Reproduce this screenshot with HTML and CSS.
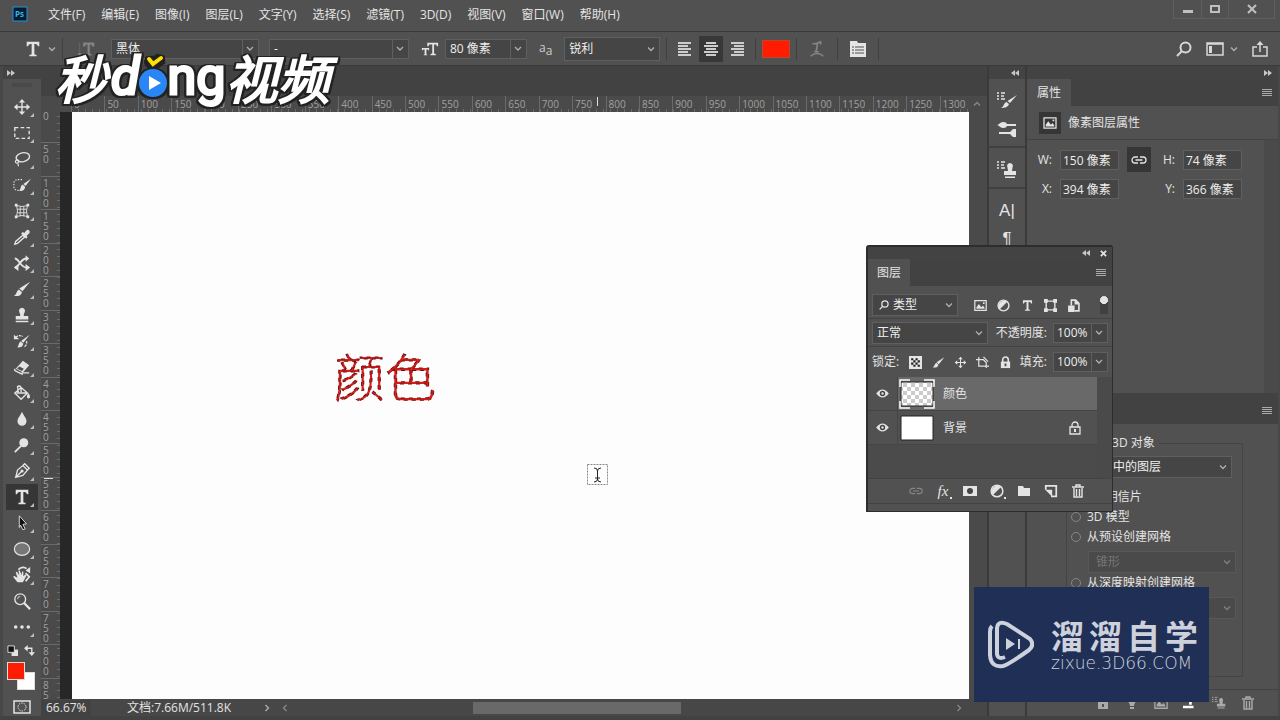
FILE: index.html
```html
<!DOCTYPE html>
<html lang="zh-CN">
<head>
    <meta charset="UTF-8">
    <meta name="viewport" content="width=device-width, initial-scale=1.0">
    <title>Photoshop</title>
    <link rel="stylesheet" href="styles.css">
</head>
<body>

<!-- shared icons -->
<svg class="sprite" aria-hidden="true">
    <symbol id="i-move" viewBox="0 0 20 20"><path d="M10 3v14M3 10h14" stroke="currentColor" stroke-width="1.5"/><path d="M10 1l3.500 4h-7zM10 19l3.500-4h-7zM1 10l4-3.500v7zM19 10l-4-3.500v7z"/></symbol>
    <symbol id="i-marquee" viewBox="0 0 20 20"><rect x="2" y="4" width="16" height="12" fill="none" stroke="currentColor" stroke-width="1.500" stroke-dasharray="4 2.500"/></symbol>
    <symbol id="i-lasso" viewBox="0 0 20 20"><ellipse cx="11" cy="8" rx="7.500" ry="5" transform="rotate(-12 11 8)" fill="none" stroke="currentColor" stroke-width="1.500"/><path d="M5 11c-3 0-3 3.500-.5 3.500S7 11 5 11M5.500 14l.500 4" fill="none" stroke="currentColor" stroke-width="1.300"/></symbol>
    <symbol id="i-quick" viewBox="0 0 20 20"><path d="M10 4H5a4 4 0 0 0-4 4v4a4 4 0 0 0 4 4h3" fill="none" stroke="currentColor" stroke-width="1.300" stroke-dasharray="1.500 1.500"/><path d="M20 3l-6 8-2.500-2zM10.500 9.500l3 2.500c-.5 4-3 5-7 4.500 2.500-1.500 1.500-5 4-7z"/></symbol>
    <symbol id="i-warp" viewBox="0 0 20 20"><path d="M4 4q6 2 12 0-2 6 0 12-6-2-12 0 2-6 0-12zM8 5v11M12 5v11M5 8h10M5 12h10" fill="none" stroke="currentColor" stroke-width="1"/><path d="M2 2h3v3H2zM15 2h3v3h-3zM2 15h3v3H2zM15 15h3v3h-3z"/></symbol>
    <symbol id="i-dropper" viewBox="0 0 20 20"><path d="M11 8l2 2-8 7-3 1 1-3z" fill="none" stroke="currentColor" stroke-width="1.500"/><path d="M9 6l2-1.500 1.500 1 2.500-3a2.300 2.300 0 0 1 3.200 3.200l-3 2.800 1 1.500-1.700 2z"/></symbol>
    <symbol id="i-content" viewBox="0 0 20 20"><path d="M2 5c5 0 6 10 13 10M2 15c5 0 6-10 13-10" fill="none" stroke="currentColor" stroke-width="2"/><path d="M14 11l5 4-5 4zM14 1.500v7l4-3.500zM6 11v8l-5-4z"/></symbol>
    <symbol id="i-brush" viewBox="0 0 20 20"><path d="M19 2l-8.500 10.500-3.500-3zM6.500 10.500l3.500 3c-1 4-4.500 5-9 4 3-1 2.500-5 5.500-7z"/></symbol>
    <symbol id="i-stamp" viewBox="0 0 20 20"><path d="M10 2a3.500 3.500 0 0 1 3 5c-1 2-1 2-1 4h5v4H3v-4h5c0-2 0-2-1-4a3.500 3.500 0 0 1 3-5zM3 16.500h14V18H3z"/></symbol>
    <symbol id="i-history" viewBox="0 0 20 20"><path d="M18.500 3l-7 9-2.500-2zM8.500 10.500l3 2.500c-1 4-4 4.500-7 4 2-1 1.500-5 4-6.500z"/><path d="M3 6c3-3 6-2 8-1M15 10c1 3-1 6-3 7" fill="none" stroke="currentColor" stroke-width="1.300" stroke-dasharray="3 1"/><path d="M1 3l6 5H1z"/></symbol>
    <symbol id="i-eraser" viewBox="0 0 20 20"><path d="M11 3l7 5-7 8-8-4z"/><path d="M10 16.500h8M2 12v2l8 4v-2" fill="none" stroke="currentColor" stroke-width="1.500"/><path d="M4.500 12l2.500-2.500 5 2.500-2 2.500z" fill="#505050"/></symbol>
    <symbol id="i-bucket" viewBox="0 0 20 20"><path d="M9 4l7 6-7 7-7-7zM4 10h11M6 9L5 3q2-2 4 1v5" fill="none" stroke="currentColor" stroke-width="1.500"/><path d="M17 10c3 4 2 6 0 6s-2-3 0-6z"/></symbol>
    <symbol id="i-drop" viewBox="0 0 20 20"><path d="M10 2c1.500 4 5 7 5 10.500a5 5 0 0 1-10 0C5 9 8.500 6 10 2z"/></symbol>
    <symbol id="i-dodge" viewBox="0 0 20 20"><circle cx="12" cy="7.500" r="5"/><path d="M9 11l-7 7" stroke="currentColor" stroke-width="2"/></symbol>
    <symbol id="i-pen" viewBox="0 0 20 20"><path d="M3 17l2-8 6-5 5 5-5 6zM3 17l6-6M11 4l2-2 5 5-2 2" fill="none" stroke="currentColor" stroke-width="1.500"/><circle cx="10" cy="10" r="1.800"/></symbol>
    <symbol id="i-type" viewBox="0 0 20 20"><path d="M3 2h14v5h-1.500C15 5 14 4.500 11.500 4.500V15c0 1.200.5 1.500 2.500 1.500V18H6v-1.500c2 0 2.500-.3 2.500-1.500V4.500C6 4.500 5 5 4.500 7H3z"/></symbol>
    <symbol id="i-arrow" viewBox="0 0 20 20"><path d="M7 2l8 9-4 .5 2.500 5-2.500 1-2.500-5L7 15z" fill="#111" stroke="currentColor"/></symbol>
    <symbol id="i-ellipse" viewBox="0 0 20 20"><ellipse cx="10" cy="10" rx="8.500" ry="7" fill="#777" stroke="currentColor" stroke-width="1.300"/></symbol>
    <symbol id="i-hand" viewBox="0 0 20 20"><path d="M5 18L0 12l1.500-1L5 13 3 7l1.500-.5 2.500 4L6 5h1.500L9.500 10l.5-4 1.500.5v5l2-2 1.500 1-4 7.500z"/><path d="M6 4c3-3 7-3 9-1M14 8l4 4-4 5" fill="none" stroke="currentColor" stroke-width="2"/><path d="M14 5l5-4v7z"/></symbol>
    <symbol id="i-zoom" viewBox="0 0 20 20"><circle cx="8" cy="8" r="6" fill="none" stroke="currentColor" stroke-width="1.500"/><path d="M5 8a3 3 0 0 1 3-3" fill="none" stroke="currentColor"/><path d="M12 12l7 7" stroke="currentColor" stroke-width="2.500"/></symbol>
    <symbol id="i-dots" viewBox="0 0 20 20"><circle cx="3" cy="10" r="2"/><circle cx="10" cy="10" r="2"/><circle cx="17" cy="10" r="2"/></symbol>
    <symbol id="i-mini" viewBox="0 0 12 12"><path d="M5 5h7v7H5z"/><path d="M1 1h7v7H1z" fill="#111" stroke="currentColor"/></symbol>
    <symbol id="i-swap" viewBox="0 0 12 12"><path d="M3 3.500h5.500V9" fill="none" stroke="currentColor" stroke-width="1.500"/><path d="M0 3.500L4 0v7zM8.500 12L5 8h7z"/></symbol>
    <symbol id="i-mask" viewBox="0 0 18 14"><rect x="1" y="1" width="16" height="12" fill="none" stroke="currentColor" stroke-width="1.500"/><circle cx="9" cy="7" r="4" fill="none" stroke="currentColor" stroke-dasharray="1.500 1"/></symbol>
    <symbol id="i-vert" viewBox="0 0 20 20"><path d="M3 3v14M1 15l2 3 2-3zM7 3h12v4h-2l-.5-2H14v10l2 1v1h-6v-1l2-1V5H9.500L9 7H7z" stroke="currentColor" stroke-width=".5"/></symbol>
    <symbol id="i-size" viewBox="0 0 20 20"><path d="M7 3h12v4h-1.500L17 5h-2.500v10l2 .5V17h-6v-1.500l2-.5V5H9l-.5 2H7zM1 9h8v2.500H8l-.5-1H6V16l1 .5v.5H3v-.5l1-.5v-5.500H2.500l-.5 1H1z"/></symbol>
    <symbol id="i-left" viewBox="0 0 16 14"><path d="M1 1h13M1 4h10M1 7h13M1 10h10M1 13h13" stroke="currentColor" stroke-width="2"/></symbol>
    <symbol id="i-center" viewBox="0 0 16 14"><path d="M3 1h10M1 4h14M3 7h10M1 10h14M3 13h10" stroke="currentColor" stroke-width="2"/></symbol>
    <symbol id="i-right" viewBox="0 0 16 14"><path d="M2 1h13M5 4h10M2 7h13M5 10h10M2 13h13" stroke="currentColor" stroke-width="2"/></symbol>
    <symbol id="i-textwarp" viewBox="0 0 20 20"><path d="M5 4c4 1 6-1 9-2v3M10 4c1 4-1 6-1 9M7 13h5M3 18c4-4 10-4 14 0" fill="none" stroke="currentColor" stroke-width="1.800"/></symbol>
    <symbol id="i-panel" viewBox="0 0 18 18"><path d="M1 1h7l1 2h8v14H1z"/><path d="M3 7h2M6 7h9M3 10h2M6 10h9M3 13h2M6 13h9" stroke="#505050"/></symbol>
    <symbol id="i-search" viewBox="0 0 16 16"><circle cx="9.500" cy="6.500" r="5" fill="none" stroke="currentColor" stroke-width="2"/><path d="M6 10l-5 5" stroke="currentColor" stroke-width="2"/></symbol>
    <symbol id="i-layout" viewBox="0 0 18 14"><path d="M1 1h16v12H1zM1 2h16" fill="none" stroke="currentColor" stroke-width="1.500"/><path d="M3 4h3v7H3z"/></symbol>
    <symbol id="i-share" viewBox="0 0 16 16"><path d="M5 6H1v9h14V6h-4M8 11V2" fill="none" stroke="currentColor" stroke-width="1.500"/><path d="M8 0l3.500 4h-7z"/></symbol>
    <symbol id="i-chev" viewBox="0 0 8 8"><path d="M1 2.500l3 3 3-3" fill="none" stroke="currentColor" stroke-width="1.300"/></symbol>
    <symbol id="i-dbl" viewBox="0 0 8 6"><path d="M0 0l4 3-4 3zM4 0l4 3-4 3z"/></symbol>
    <symbol id="i-menu" viewBox="0 0 10 8"><path d="M0 .5h10M0 2.500h10M0 4.500h10M0 6.500h10" stroke="currentColor"/></symbol>
    <symbol id="i-brushes" viewBox="0 0 20 20"><path d="M0 2h2M0 5h2M0 8h2M4 2h4M4 5h3M4 8h4" stroke="currentColor" stroke-width="1.300"/><path d="M20 4l-7 8-2.500-2zM9.500 11l2.500 2c-1 3-4 4-8 4 3-1 2.500-5 5.500-6z"/></symbol>
    <symbol id="i-presets" viewBox="0 0 20 20"><path d="M7 6h12M2 14h12" stroke="currentColor" stroke-width="2"/><path d="M0 6c2 0 3-3 6-3 3 0 4 1 4 3s-1 3-4 3-4-3-6-3zM13 13l3-3h3v8h-3l-3-3z"/></symbol>
    <symbol id="i-clone" viewBox="0 0 20 20"><path d="M0 2h2M0 5h2M0 8h2M4 2h4M4 5h3M4 8h4" stroke="currentColor" stroke-width="1.300"/><path d="M13 3a3 3 0 0 1 2.500 4.500L15 11h4v4H7v-4h4l-.5-3.500A3 3 0 0 1 13 3zM8 16.500h10V18H8z"/></symbol>
    <symbol id="i-image" viewBox="0 0 16 14"><path d="M1 1h14v12H1z" fill="none" stroke="currentColor" stroke-width="1.500"/><path d="M3 11V9l3-4 3 4 2-2 2 3v1zM11 3h2v2h-2z"/></symbol>
    <symbol id="i-link" viewBox="0 0 16 10"><path d="M7 2H4a3 3 0 0 0 0 6h3M9 2h3a3 3 0 0 1 0 6H9M4.500 5h7" fill="none" stroke="currentColor" stroke-width="1.300"/></symbol>
    <symbol id="i-adjust" viewBox="0 0 12 12"><circle cx="6" cy="6" r="5" fill="none" stroke="currentColor" stroke-width="1.300"/><path d="M9.500 2.500a5 5 0 0 0-7 7z"/></symbol>
    <symbol id="i-shape" viewBox="0 0 12 12"><path d="M2 2h8v8H2z" fill="none" stroke="currentColor" stroke-width="1.300"/><path d="M0 0h3.500v3.500H0zM8.500 0H12v3.500H8.500zM0 8.500h3.500V12H0zM8.500 8.500H12V12H8.500z"/></symbol>
    <symbol id="i-smart" viewBox="0 0 12 12"><path d="M4 6V1h4l3 3v7H7" fill="none" stroke="currentColor" stroke-width="1.500"/><path d="M1 6h6v6H1zM7 1h1l3 3v1H7z"/></symbol>
    <symbol id="i-checker" viewBox="0 0 12 12"><path d="M0 0h12v12H0z"/><path d="M2 2h2v2H2zM6 2h2v2H6zM4 4h2v2H4zM8 4h2v2H8zM2 6h2v2H2zM6 6h2v2H6zM4 8h2v2H4zM8 8h2v2H8z" fill="#222"/></symbol>
    <symbol id="i-crop" viewBox="0 0 14 12"><path d="M3 0v10h11M0 3h8l3 3v6M8 0l5 5" fill="none" stroke="currentColor" stroke-width="1.300"/></symbol>
    <symbol id="i-lock" viewBox="0 0 12 14"><path d="M1 6h10v7H1z"/><path d="M3 7V4a3 3 0 0 1 6 0v3" fill="none" stroke="currentColor" stroke-width="1.700"/><path d="M5 8h2v3H5z" fill="#505050"/></symbol>
    <symbol id="i-locked" viewBox="0 0 12 14"><path d="M1 6h10v7H1zM3 6V4a3 3 0 0 1 6 0v2" fill="none" stroke="currentColor" stroke-width="1.300"/><path d="M5 8h2v3H5z"/></symbol>
    <symbol id="i-eye" viewBox="0 0 14 10"><path d="M0 5q7-9 14 0-7 9-14 0z"/><circle cx="7" cy="5" r="3" fill="#444"/><circle cx="7" cy="5" r="1.300"/></symbol>
    <symbol id="i-addmask" viewBox="0 0 14 12"><path d="M0 1h14v10H0z"/><circle cx="7" cy="6" r="3" fill="#444"/></symbol>
    <symbol id="i-folder" viewBox="0 0 14 12"><path d="M1 1h5l1 2h6v8H1z"/></symbol>
    <symbol id="i-new" viewBox="0 0 12 12"><path d="M1.500 5V1.500h9v9H6" fill="none" stroke="currentColor" stroke-width="1.500"/><path d="M1 5h6v6z"/></symbol>
    <symbol id="i-trash" viewBox="0 0 12 14"><path d="M0 3h12M4 3V1h4v2M2 4v9h8V4M4.500 5v7M7.500 5v7" fill="none" stroke="currentColor" stroke-width="1.400"/></symbol>
    <symbol id="i-bulb" viewBox="0 0 12 14"><path d="M2 4a4 4 0 0 1 8 0c0 3-2 3-2 6H4c0-3-2-3-2-6zM4 11h4v2H4z"/></symbol>
    <symbol id="i-ground" viewBox="0 0 16 14"><path d="M7 2h3v7H7zM0 10h12v3H0z"/></symbol>
</svg>

<header class="menubar">
    <svg class="ps" viewBox="0 0 16 16"><rect x="1" y="1" width="14" height="14" fill="#021c30" stroke="#2794cf"/><text x="3" y="11" font-size="8">Ps</text></svg>
    <nav class="menus">
        <a href="#">文件(F)</a>
        <a href="#">编辑(E)</a>
        <a href="#">图像(I)</a>
        <a href="#">图层(L)</a>
        <a href="#">文字(Y)</a>
        <a href="#">选择(S)</a>
        <a href="#">滤镜(T)</a>
        <a href="#">3D(D)</a>
        <a href="#">视图(V)</a>
        <a href="#">窗口(W)</a>
        <a href="#">帮助(H)</a>
    </nav>
    <div class="window-buttons">
        <button aria-label="最小化"><svg viewBox="0 0 12 12"><path d="M1 7h10v3H1z"/></svg></button>
        <button aria-label="最大化"><svg viewBox="0 0 12 12"><path d="M2 3h8v6H2z" fill="none" stroke="currentColor" stroke-width="2"/></svg></button>
        <button aria-label="关闭"><svg viewBox="0 0 12 12"><path d="M2 2l8 8M10 2l-8 8" stroke="currentColor" stroke-width="2"/></svg></button>
    </div>
</header>

<div class="options">
    <svg class="icon big"><use href="#i-type"/></svg>
    <svg class="chev"><use href="#i-chev"/></svg>
    <i class="sep"></i>
    <button class="orient dim" aria-label="切换文本取向"><svg class="icon big"><use href="#i-vert"/></svg></button>
    <select class="combo font" aria-label="字体"><option>黑体</option></select>
    <select class="combo style" aria-label="字体样式"><option>-</option></select>
    <svg class="icon big"><use href="#i-size"/></svg>
    <select class="combo size" aria-label="字体大小"><option>80 像素</option></select>
    <span class="aa">a<sub>a</sub></span>
    <select class="drop sharp" aria-label="消除锯齿"><option>锐利</option></select>
    <i class="sep"></i>
    <div class="aligns">
        <button aria-label="左对齐"><svg><use href="#i-left"/></svg></button>
        <button class="active" aria-label="居中对齐"><svg><use href="#i-center"/></svg></button>
        <button aria-label="右对齐"><svg><use href="#i-right"/></svg></button>
    </div>
    <i class="sep"></i>
    <button class="color" aria-label="文本颜色"></button>
    <i class="sep"></i>
    <button class="warp dim" aria-label="变形文字"><svg class="icon big"><use href="#i-textwarp"/></svg></button>
    <i class="sep"></i>
    <button class="char" aria-label="字符面板"><svg class="icon big"><use href="#i-panel"/></svg></button>
    <i class="sep"></i>
    <div class="right-tools">
        <button aria-label="搜索"><svg class="icon"><use href="#i-search"/></svg></button>
        <button aria-label="工作区"><svg class="icon wide"><use href="#i-layout"/></svg><svg class="chev"><use href="#i-chev"/></svg></button>
        <button aria-label="共享"><svg class="icon"><use href="#i-share"/></svg></button>
    </div>
</div>

<main class="workspace">
    <aside class="toolbox">
        <div class="strip"><svg class="dbl"><use href="#i-dbl"/></svg></div>
        <div class="grip"></div>
        <div class="tools">
            <button aria-label="移动"><svg><use href="#i-move"/></svg></button>
            <button aria-label="选框"><svg><use href="#i-marquee"/></svg></button>
            <button aria-label="套索"><svg><use href="#i-lasso"/></svg></button>
            <button aria-label="快速选择"><svg><use href="#i-quick"/></svg></button>
            <button aria-label="透视裁剪"><svg><use href="#i-warp"/></svg></button>
            <button aria-label="吸管"><svg><use href="#i-dropper"/></svg></button>
            <button aria-label="内容感知移动"><svg><use href="#i-content"/></svg></button>
            <button aria-label="画笔"><svg><use href="#i-brush"/></svg></button>
            <button aria-label="仿制图章"><svg><use href="#i-stamp"/></svg></button>
            <button aria-label="历史记录画笔"><svg><use href="#i-history"/></svg></button>
            <button aria-label="橡皮擦"><svg><use href="#i-eraser"/></svg></button>
            <button aria-label="油漆桶"><svg><use href="#i-bucket"/></svg></button>
            <button aria-label="模糊"><svg><use href="#i-drop"/></svg></button>
            <button aria-label="减淡"><svg><use href="#i-dodge"/></svg></button>
            <button aria-label="钢笔"><svg><use href="#i-pen"/></svg></button>
            <button class="active" aria-label="文字"><svg><use href="#i-type"/></svg></button>
            <button aria-label="路径选择"><svg><use href="#i-arrow"/></svg></button>
            <button aria-label="椭圆"><svg><use href="#i-ellipse"/></svg></button>
            <button aria-label="旋转视图"><svg><use href="#i-hand"/></svg></button>
            <button class="single" aria-label="缩放"><svg><use href="#i-zoom"/></svg></button>
            <button aria-label="编辑工具栏"><svg><use href="#i-dots"/></svg></button>
        </div>
        <div class="mini">
            <svg><use href="#i-mini"/></svg>
            <svg><use href="#i-swap"/></svg>
        </div>
        <div class="swatches">
            <button class="bg" aria-label="背景色"></button>
            <button class="fg" aria-label="前景色"></button>
        </div>
        <button class="quickmask" aria-label="快速蒙版"><svg><use href="#i-mask"/></svg></button>
    </aside>

    <section class="document">
        <div class="doc-tabs"></div>
        <div class="ruler-top">
            <div class="scale">
                <span>0</span><span>50</span><span>100</span><span>150</span><span>200</span><span>250</span><span>300</span><span>350</span><span>400</span>
                <span>450</span><span>500</span><span>550</span><span>600</span><span>650</span><span>700</span><span>750</span><span>800</span><span>850</span>
                <span>900</span><span>950</span><span>1000</span><span>1050</span><span>1100</span><span>1150</span><span>1200</span><span>1250</span><span>1300</span>
            </div>
            <i class="mark-x"></i>
            <svg class="chev up"><use href="#i-chev"/></svg>
        </div>
        <div class="view">
            <div class="ruler-left">
                <div class="scale">
                    <span>0</span><span>50</span><span>100</span><span>150</span><span>200</span><span>250</span><span>300</span><span>350</span><span>400</span>
                    <span>450</span><span>500</span><span>550</span><span>600</span><span>650</span><span>700</span><span>750</span><span>800</span><span>850</span>
                </div>
                <i class="mark-y"></i>
            </div>
            <div class="pasteboard">
                <div class="canvas">
                    <svg class="art" viewBox="0 0 110 72"><text x="2" y="51">颜色</text><text class="ants" x="2" y="51" aria-hidden="true">颜色</text></svg>
                    <svg class="cursor" viewBox="0 0 22 22"><rect x=".5" y=".5" width="20" height="20" fill="none" stroke="#888" stroke-dasharray="2 1"/><path d="M7 4q3.500 0 3.500 3v8q0 3-3.500 3M14 4q-3.500 0-3.500 3v8q0 3 3.500 3M8 14h5" fill="none" stroke="#222"/></svg>
                </div>
            </div>
            <div class="vscroll"></div>
        </div>
        <footer class="status">
            <span class="zoom">66.67%</span>
            <span class="info">文档:7.66M/511.8K</span>
            <svg class="chev next"><use href="#i-chev"/></svg>
            <div class="hscroll">
                <svg class="chev prev"><use href="#i-chev"/></svg>
                <div class="track"><i></i></div>
                <svg class="chev next"><use href="#i-chev"/></svg>
            </div>
        </footer>
    </section>

    <aside class="dock">
        <div class="strip end"><svg class="dbl flip"><use href="#i-dbl"/></svg></div>
        <div class="group">
            <button aria-label="画笔"><svg><use href="#i-brushes"/></svg></button>
            <button aria-label="画笔预设"><svg><use href="#i-presets"/></svg></button>
        </div>
        <div class="group">
            <button aria-label="仿制源"><svg><use href="#i-clone"/></svg></button>
        </div>
        <div class="group">
            <button class="glyph">A|</button>
            <button class="glyph">¶</button>
        </div>
    </aside>

    <aside class="panels">
        <div class="strip end"><svg class="dbl"><use href="#i-dbl"/></svg></div>
        <section class="panel props">
            <div class="tabs">
                <button class="tab">属性</button>
                <svg class="menu-icon"><use href="#i-menu"/></svg>
            </div>
            <h2><span class="kind"><svg><use href="#i-image"/></svg></span>像素图层属性</h2>
            <div class="props-body">
                <div class="fields">
                    <label for="w">W:</label><input id="w" value="150 像素">
                    <button class="linked" aria-label="链接宽高"><svg><use href="#i-link"/></svg></button>
                    <label for="h">H:</label><input id="h" value="74 像素">
                    <label for="x">X:</label><input id="x" value="394 像素">
                    <i></i>
                    <label for="y">Y:</label><input id="y" value="366 像素">
                </div>
            </div>
        </section>
        <section class="panel three-d">
            <div class="tabs"><svg class="menu-icon"><use href="#i-menu"/></svg></div>
            <div class="three-body">
                <fieldset>
                    <legend>新建 3D 对象</legend>
                    <select class="drop source" aria-label="源"><option>选中的图层</option></select>
                    <label><input type="radio" name="mesh">3D 明信片</label>
                    <label><input type="radio" name="mesh">3D 模型</label>
                    <label><input type="radio" name="mesh">从预设创建网格</label>
                    <select class="drop preset" aria-label="预设" disabled><option>锥形</option></select>
                    <label><input type="radio" name="mesh">从深度映射创建网格</label>
                    <select class="drop preset" aria-label="深度映射" disabled><option>平面</option></select>
                </fieldset>
            </div>
            <div class="three-foot">
                <svg><use href="#i-lock"/></svg>
                <svg><use href="#i-bulb"/></svg>
                <svg><use href="#i-image"/></svg>
                <svg class="lit"><use href="#i-ground"/></svg>
                <svg><use href="#i-clone"/></svg>
                <svg><use href="#i-trash"/></svg>
            </div>
        </section>
    </aside>
</main>

<!-- floating layers panel -->
<section class="layers">
    <div class="layers-top">
        <svg class="dbl flip"><use href="#i-dbl"/></svg>
        <button aria-label="关闭面板"><svg viewBox="0 0 8 8"><path d="M1 1l6 6M7 1L1 7" stroke="currentColor" stroke-width="2"/></svg></button>
    </div>
    <div class="tabs">
        <button class="tab">图层</button>
        <svg class="menu-icon"><use href="#i-menu"/></svg>
    </div>
    <div class="row filter">
        <div class="kind-select">
            <svg><use href="#i-search"/></svg>
            <select class="drop" aria-label="滤镜类型"><option>类型</option></select>
        </div>
        <div class="filter-icons">
            <svg><use href="#i-image"/></svg>
            <svg><use href="#i-adjust"/></svg>
            <svg><use href="#i-type"/></svg>
            <svg><use href="#i-shape"/></svg>
            <svg><use href="#i-smart"/></svg>
        </div>
        <i class="toggle"></i>
    </div>
    <div class="row blend">
        <select class="drop mode" aria-label="混合模式"><option>正常</option></select>
        <label for="opacity">不透明度:</label>
        <select class="combo pct" id="opacity"><option>100%</option></select>
    </div>
    <div class="row locks">
        <span>锁定:</span>
        <div class="lock-icons">
            <svg><use href="#i-checker"/></svg>
            <svg><use href="#i-brush"/></svg>
            <svg><use href="#i-move"/></svg>
            <svg><use href="#i-crop"/></svg>
            <svg><use href="#i-lock"/></svg>
        </div>
        <label for="fill">填充:</label>
        <select class="combo pct" id="fill"><option>100%</option></select>
    </div>
    <div class="layer-list">
        <div class="layer selected">
            <svg class="eye"><use href="#i-eye"/></svg>
            <div class="layer-body">
                <svg class="thumb" viewBox="0 0 36 30">
                    <defs><pattern id="chk" width="8" height="8" patternUnits="userSpaceOnUse"><path d="M0 0h8v8H0z" fill="#fff"/><path d="M0 0h4v4H0zM4 4h4v4H4z" fill="#ccc"/></pattern></defs>
                    <path d="M2 3h32v24H2z" fill="url(#chk)" stroke="#222"/>
                    <path d="M1 8V1h10M25 1h10v7M35 22v7H25M11 29H1v-7" fill="none" stroke="#fff" stroke-width="1.500"/>
                </svg>
                <span>颜色</span>
            </div>
        </div>
        <div class="layer">
            <svg class="eye"><use href="#i-eye"/></svg>
            <div class="layer-body">
                <svg class="thumb" viewBox="0 0 36 30"><path d="M2 3h32v24H2z" fill="#fff" stroke="#222"/></svg>
                <span>背景</span>
                <svg class="locked"><use href="#i-locked"/></svg>
            </div>
        </div>
    </div>
    <div class="layer-actions">
        <button class="dim" aria-label="链接图层"><svg><use href="#i-link"/></svg></button>
        <button class="fx more">fx</button>
        <button aria-label="蒙版"><svg><use href="#i-addmask"/></svg></button>
        <button class="more" aria-label="调整图层"><svg><use href="#i-adjust"/></svg></button>
        <button aria-label="新建组"><svg><use href="#i-folder"/></svg></button>
        <button aria-label="新建图层"><svg><use href="#i-new"/></svg></button>
        <button aria-label="删除图层"><svg><use href="#i-trash"/></svg></button>
    </div>
</section>

<!-- video logos -->
<div class="miaodong">
    <span class="zh">秒</span><span class="en slant">d</span>
    <svg viewBox="0 0 28 50"><path d="M10 7l4 5 8-6" fill="none" stroke="#222" stroke-width="8"/><path d="M10 7l4 5 8-6" fill="none" stroke="#ffe100" stroke-width="4" stroke-linecap="round"/><circle cx="14" cy="31" r="14" fill="#2b86f5"/><path d="M10 24v14l12-7z" fill="#fff"/></svg>
    <span class="en">ng</span><span class="zh">视频</span>
</div>

<div class="zixue">
    <svg viewBox="0 0 46 50"><path d="M4 6Q2 8 2 12V35Q3 48 15 46Q20 45 41 30Q47 25 42 19L19 4Q10 0 9 8V34Q10 40 17 37" fill="none" stroke="#ccd1dc" stroke-width="4"/><path d="M18 18v12l9-6zM30 19h2v10h-2z" fill="#ccd1dc"/></svg>
    <div>
        <p class="name"><span>溜</span><span>溜</span><span>自</span><span>学</span></p>
        <p class="site">zixue.3D66.COM</p>
    </div>
</div>

</body>
</html>
```
FILE: styles.css
```css
* {
    box-sizing: border-box;
}
body {
    margin: 0;
    height: 100vh;
    display: flex;
    flex-direction: column;
    overflow: hidden;
    position: relative;
    background-color: #424242;
    color: #e4e4e4;
    font: 12px/16px "Open Sans", "Noto Sans CJK SC", sans-serif;
}
button {
    display: flex;
    align-items: center;
    justify-content: center;
    padding: 0;
    border: none;
    background: none;
    color: inherit;
    font: inherit;
}
svg {
    display: block;
    flex: none;
    fill: currentColor;
}
.sprite {
    display: none;
}
a {
    color: inherit;
    text-decoration: none;
}
.dim {
    color: #858585;
}
.chev {
    width: 8px;
    height: 8px;
    color: #b0b0b0;
}
.up {
    transform: rotate(180deg);
}
.next {
    transform: rotate(-90deg);
}
.prev {
    transform: rotate(90deg);
}
.icon {
    width: 16px;
    height: 16px;
}
.icon.big {
    width: 18px;
    height: 18px;
}
.icon.wide {
    width: 18px;
}
.dbl {
    width: 8px;
    height: 6px;
    color: #c8c8c8;
}
.flip {
    transform: scaleX(-1);
}

/* drop-downs */
select,
input {
    font: inherit;
    color: #eee;
    margin: 0;
    border: 1px solid #5f5f5f;
    background-color: #454545;
    border-radius: 0;
}
select {
    appearance: none;
    height: 20px;
    padding: 0 18px 0 4px;
    background-image: url("data:image/svg+xml,%3Csvg xmlns='http://www.w3.org/2000/svg' width='8' height='8'%3E%3Cpath d='M1 2.500l3 3 3-3' fill='none' stroke='%23b0b0b0' stroke-width='1.300'/%3E%3C/svg%3E");
    background-repeat: no-repeat;
    background-position: right 4px center;
}
.combo {
    background-image: url("data:image/svg+xml,%3Csvg xmlns='http://www.w3.org/2000/svg' width='16' height='20'%3E%3Cpath d='M.5 0v20' stroke='%235f5f5f'/%3E%3Cpath d='M5 8l3 3 3-3' fill='none' stroke='%23b0b0b0' stroke-width='1.300'/%3E%3C/svg%3E");
    background-position: right center;
}
select:disabled {
    color: #999;
    opacity: 0.5;
}

/* menu bar */
.menubar {
    display: flex;
    height: 32px;
    flex: none;
    padding-left: 12px;
    background-color: #515151;
    border-bottom: 1px solid #3a3a3a;
}
.ps {
    width: 16px;
    height: 16px;
    margin-top: 6px;
}
.ps text {
    fill: #40b0e8;
    font-weight: bold;
}
.menus {
    display: flex;
    gap: 16px;
    padding: 7px 0 0 20px;
}
.window-buttons {
    display: flex;
    height: 19px;
    margin: 0 5px 0 auto;
    border: 1px solid #5e5e5e;
    border-top: none;
    color: #c0c0c0;
}
.window-buttons button {
    width: 27px;
}
.window-buttons button + button {
    border-left: 1px solid #5e5e5e;
}
.window-buttons button:last-child {
    width: 46px;
}
.window-buttons svg {
    width: 12px;
    height: 12px;
}

/* options bar */
.options {
    display: flex;
    align-items: center;
    flex: none;
    height: 34px;
    padding-left: 24px;
    background-color: #515151;
    border-bottom: 1px solid #3a3a3a;
}
.options > .chev {
    margin-left: 6px;
}
.sep {
    width: 1px;
    height: 22px;
    margin: 0 6px;
    background-color: #404040;
}
.orient {
    margin: 0 16px 0 8px;
}
.font {
    width: 148px;
    margin-right: 10px;
}
.style {
    width: 140px;
    margin-right: 12px;
}
.size {
    width: 82px;
    margin: 0 12px 0 6px;
}
.aa {
    margin-right: 12px;
    color: #ccc;
    line-height: 12px;
}
.aa sub {
    font-size: 12px;
    line-height: 8px;
}
.sharp {
    width: 96px;
    height: 24px;
}
.aligns {
    display: flex;
    gap: 2px;
}
.aligns button {
    width: 24px;
    height: 26px;
}
.aligns button.active {
    background-color: #383838;
}
.aligns svg {
    width: 16px;
    height: 14px;
    color: #ccc;
}
.color {
    width: 28px;
    height: 18px;
    background-color: #ff1c00;
    border: 1px solid #b8492f;
}
.warp,
.char {
    width: 28px;
}
.right-tools {
    display: flex;
    gap: 14px;
    margin: 0 12px 0 auto;
    color: #d8d8d8;
}
.right-tools button {
    gap: 6px;
}

/* workspace */
.workspace {
    flex: 1;
    min-height: 0;
    display: flex;
    padding-bottom: 4px;
}
.strip {
    height: 13px;
    flex: none;
    display: flex;
    align-items: center;
    padding: 0 6px;
    background-color: #434343;
}
.strip.end {
    justify-content: flex-end;
}
.toolbox {
    display: flex;
    flex-direction: column;
    width: 41px;
    border-left: 3px solid #484848;
    background-color: #515151;
}
.toolbox .strip {
    padding: 0 4px;
}
.grip {
    width: 20px;
    height: 4px;
    margin: 4px auto 7px;
    background-color: #494949;
}
.tools button {
    position: relative;
    width: 32px;
    height: 26px;
    margin-left: 3px;
}
.tools button.active {
    background-color: #363636;
}
.tools svg {
    width: 18px;
    height: 18px;
}
.tools button::after {
    content: '';
    position: absolute;
    right: 4px;
    bottom: 3px;
    border: 2px solid transparent;
    border-right-color: #bbb;
    border-bottom-color: #bbb;
}
.tools button.single::after {
    display: none;
}
.mini {
    display: flex;
    gap: 6px;
    margin: 5px 0 0 4px;
}
.mini svg {
    width: 11px;
    height: 11px;
}
.swatches {
    display: grid;
    grid-template-columns: 10px 8px 10px;
    grid-template-rows: 10px 8px 10px;
    margin: 6px 0 0 4px;
}
.swatches button {
    border: 1px solid #ddd;
}
.bg {
    grid-area: 2 / 2 / 4 / 4;
    background-color: #fff;
}
.fg {
    grid-area: 1 / 1 / 3 / 3;
    background-color: #ff1c00;
}
.quickmask {
    margin: 10px auto 0;
}
.quickmask svg {
    width: 18px;
    height: 14px;
}

/* document */
.document {
    flex: 1;
    min-width: 0;
    display: flex;
    flex-direction: column;
    background-color: #4a4a4a;
}
.doc-tabs {
    height: 30px;
    flex: none;
    background-color: #424242;
}
.ruler-top {
    position: relative;
    display: flex;
    align-items: center;
    height: 16px;
    flex: none;
    padding-left: 30px;
    color: #a0a0a0;
    font-size: 10px;
    line-height: 16px;
}
.ruler-top .scale {
    flex: 1;
    height: 16px;
    display: grid;
    grid-template-columns: repeat(27, 1fr);
    background: repeating-linear-gradient(90deg, #6a6a6a 0 1px, transparent 1px 7px) bottom / 100% 3px no-repeat;
}
.ruler-top .scale span {
    padding-left: 2px;
    border-left: 1px solid #6a6a6a;
}
.ruler-top .chev {
    margin-right: 6px;
    color: #888;
}
.mark-x {
    position: absolute;
    left: 556px;
    top: 1px;
    width: 1px;
    height: 9px;
    background-color: #ddd;
}
.view {
    flex: 1;
    min-height: 0;
    display: flex;
}
.ruler-left {
    position: relative;
    width: 19px;
    overflow: hidden;
    color: #a0a0a0;
    font-size: 10px;
    line-height: 10px;
}
.ruler-left .scale {
    display: grid;
    height: 602px;
    margin-top: -3px;
    grid-template-rows: repeat(18, 1fr);
    background: repeating-linear-gradient(#6a6a6a 0 1px, transparent 1px 7px) right / 3px 100% no-repeat;
}
.ruler-left .scale span {
    border-top: 1px solid #6a6a6a;
    padding: 1px 11px 0 2px;
    word-break: break-all;
}
.mark-y {
    position: absolute;
    top: 366px;
    left: 3px;
    width: 9px;
    height: 1px;
    background-color: #ddd;
}
.pasteboard {
    flex: 1;
    display: flex;
    padding-left: 12px;
    background-color: #272727;
}
.canvas {
    position: relative;
    flex: 1;
    background-color: #fdfdfd;
}
.art {
    position: absolute;
    left: 260px;
    top: 234px;
    width: 110px;
    height: 72px;
    overflow: visible;
    font-family: "Noto Sans CJK SC", sans-serif;
    font-size: 51px;
    font-weight: 300;
    fill: #d3201c;
}
.ants {
    fill: none;
    stroke: #6b0c0c;
    stroke-dasharray: 4 4;
}
.cursor {
    position: absolute;
    left: 515px;
    top: 352px;
    width: 22px;
    height: 22px;
}
.vscroll {
    width: 18px;
    background-color: #4a4a4a;
}
.status {
    display: flex;
    align-items: center;
    height: 17px;
    flex: none;
    background-color: #474747;
    line-height: 16px;
}
.zoom {
    width: 50px;
    padding-left: 5px;
    background-color: #424242;
}
.info {
    margin-left: 36px;
    width: 136px;
}
.hscroll {
    flex: 1;
    display: flex;
    align-items: center;
    gap: 8px;
    padding: 0 24px 0 10px;
}
.hscroll .chev {
    color: #888;
}
.track {
    flex: 1;
}
.track i {
    display: block;
    width: 32%;
    height: 12px;
    margin-left: 27%;
    background-color: #696969;
}

/* icon dock */
.dock {
    width: 40px;
    padding-bottom: 1px;
    border: solid #3a3a3a;
    border-width: 0 2px;
    background-color: #515151;
}
.dock .group {
    display: flex;
    flex-direction: column;
    align-items: center;
    padding: 8px 0 3px;
    border-bottom: 2px solid #404040;
}
.dock .group:last-child {
    border: none;
}
.dock button {
    width: 36px;
    height: 28px;
}
.dock svg:not(.dbl) {
    width: 20px;
    height: 20px;
}
.glyph {
    font: 17px/20px "Liberation Sans", sans-serif;
}

/* right panels */
.panels {
    width: 253px;
    display: flex;
    flex-direction: column;
    border-right: 2px solid #484848;
}
.tabs {
    display: flex;
    align-items: center;
    height: 27px;
    flex: none;
    padding-right: 6px;
    background-color: #424242;
}
.tab {
    height: 100%;
    padding: 0 10px;
    background-color: #515151;
}
.menu-icon {
    width: 10px;
    height: 8px;
    margin-left: auto;
    color: #aaa;
}
.panel {
    background-color: #515151;
}
.props {
    flex: 0 0 314px;
    display: flex;
    flex-direction: column;
}
.props h2 {
    display: flex;
    align-items: center;
    gap: 7px;
    height: 34px;
    flex: none;
    margin: 0;
    padding-left: 12px;
    font-size: 12px;
    font-weight: normal;
    border-bottom: 1px solid #424242;
}
.kind {
    display: flex;
    padding: 5px 4px;
    background-color: #363636;
}
.kind svg {
    width: 14px;
    height: 12px;
}
.props-body {
    flex: 1;
    padding: 7px 0 0 9px;
    border-right: 14px solid #4a4a4a;
}
.fields {
    display: grid;
    grid-template-columns: 16px 59px 24px 16px 59px;
    grid-auto-rows: 25px;
    column-gap: 8px;
    row-gap: 4px;
    align-items: center;
}
.fields label {
    text-align: right;
}
.fields input {
    width: 59px;
    height: 20px;
    padding: 0 2px;
}
.linked {
    height: 25px;
    background-color: #363636;
}
.linked svg {
    width: 16px;
    height: 10px;
}
.three-d {
    flex: 1;
    min-height: 0;
    margin-top: 4px;
    display: flex;
    flex-direction: column;
}
.three-body {
    flex: 1;
    min-height: 0;
    padding: 11px 35px 12px 39px;
    overflow: hidden;
}
fieldset {
    height: 100%;
    margin: 0;
    padding: 5px 6px 0;
    border: 1px solid #454545;
    display: flex;
    flex-direction: column;
}
legend {
    padding: 0 4px 0 12px;
}
fieldset label {
    display: flex;
    align-items: center;
    gap: 6px;
    height: 20px;
}
fieldset input {
    appearance: none;
    width: 10px;
    height: 10px;
    margin-left: -2px;
    border: 1px solid #858585;
    border-radius: 50%;
    background: none;
}
.source {
    height: 22px;
    margin: 0 4px 9px 20px;
    padding-left: 7px;
}
.preset {
    height: 22px;
    flex: none;
    margin: 4px 0 0 15px;
    padding-left: 7px;
}
.three-foot {
    display: flex;
    align-items: center;
    justify-content: flex-end;
    gap: 15px;
    height: 27px;
    flex: none;
    padding-right: 23px;
    color: #aaa;
    border-top: 1px solid #424242;
}
.three-foot svg {
    width: 14px;
    height: 14px;
}
.lit {
    color: #fff;
}

/* layers */
.layers {
    position: absolute;
    left: 866px;
    top: 245px;
    width: 247px;
    padding-bottom: 7px;
    background-color: #515151;
    border: solid #2d2d2d;
    border-width: 2px 1px 1px 2px;
    border-radius: 3px 3px 0 0;
}
.layers-top {
    display: flex;
    align-items: center;
    justify-content: flex-end;
    gap: 10px;
    height: 12px;
    padding-right: 5px;
    background-color: #434343;
}
.layers-top button svg {
    width: 7px;
    height: 7px;
}
.layers .tab {
    padding: 0 9px;
}
.row {
    display: flex;
    align-items: center;
    height: 28px;
    padding: 0 4px;
    border-bottom: 1px solid #424242;
}
.filter {
    height: 33px;
    padding-top: 6px;
}
.kind-select {
    display: flex;
    align-items: center;
    width: 86px;
    height: 22px;
    padding-left: 6px;
    background-color: #454545;
    border: 1px solid #5f5f5f;
}
.kind-select svg {
    width: 10px;
    height: 10px;
}
.kind-select select {
    flex: 1;
    border: none;
    background-color: transparent;
}
.filter-icons {
    flex: 1;
    display: flex;
    justify-content: space-between;
    padding: 0 20px 0 16px;
}
.filter-icons svg {
    width: 13px;
    height: 13px;
}
.toggle {
    width: 8px;
    height: 18px;
    background: radial-gradient(circle 4px at 4px 4px, #e4e4e4 95%, transparent) #404040;
    border-radius: 4px 4px 0 0;
}
.mode {
    flex: 1;
    height: 22px;
}
.blend label {
    margin: 0 6px 0 8px;
}
.pct {
    width: 55px;
    padding-left: 3px;
}
.locks {
    height: 30px;
    border-bottom: none;
}
.lock-icons {
    flex: 1;
    display: flex;
    justify-content: space-between;
    padding: 0 8px 0 10px;
}
.lock-icons svg {
    width: 13px;
    height: 13px;
}
.locks label {
    margin-right: 6px;
}
.layer-list {
    height: 102px;
    border-right: 15px solid #4a4a4a;
    border-bottom: 1px solid #424242;
    background-color: #4b4b4b;
}
.layer {
    display: flex;
    align-items: center;
    height: 34px;
    background-color: #515151;
    border-bottom: 1px solid #454545;
}
.eye {
    width: 13px;
    height: 9px;
    margin: 0 8px;
}
.layer-body {
    flex: 1;
    display: flex;
    align-items: center;
    height: 100%;
    padding-left: 1px;
    border-left: 1px solid #454545;
}
.selected .layer-body {
    background-color: #696969;
}
.thumb {
    width: 36px;
    height: 30px;
    margin-right: 8px;
}
.locked {
    width: 12px;
    height: 14px;
    margin: 0 16px 0 auto;
}
.layer-actions {
    display: flex;
    justify-content: center;
    gap: 3px;
    height: 25px;
    padding-right: 14px;
    padding-left: 28px;
    border-bottom: 1px solid #424242;
}
.layer-actions button {
    position: relative;
    width: 24px;
}
.layer-actions svg {
    width: 14px;
    height: 14px;
}
.fx {
    font: italic 15px/16px "Liberation Serif", serif;
}
.more::after {
    content: '';
    position: absolute;
    right: 3px;
    bottom: 4px;
    width: 2px;
    height: 2px;
    background-color: #e4e4e4;
}

/* logos over the screen */
.miaodong {
    position: absolute;
    left: 55px;
    top: 44px;
    display: flex;
    align-items: center;
    height: 66px;
    color: #fff;
    filter: drop-shadow(2px 0 0 #222) drop-shadow(-2px 0 0 #222) drop-shadow(0 2px 0 #222) drop-shadow(0 -1px 0 #222);
}
.miaodong .zh {
    font: italic 52px/66px "Noto Sans CJK SC", sans-serif;
    -webkit-text-stroke: 2px #fff;
}
.miaodong .en {
    font: 52px/66px Roboto, sans-serif;
    -webkit-text-stroke: 3px #fff;
}
.miaodong .slant {
    margin-left: 4px;
    font-style: italic;
}
.miaodong svg {
    width: 28px;
    height: 50px;
}
.zixue {
    position: absolute;
    right: 71px;
    bottom: 18px;
    display: flex;
    align-items: center;
    gap: 17px;
    padding: 30px 11px 29px 14px;
    background-color: #202f55;
    color: #ccd1dc;
}
.zixue svg {
    width: 46px;
    height: 50px;
}
.zixue p {
    margin: 0;
}
.name {
    display: flex;
    gap: 5px;
    font: bold 33px/36px "Noto Sans CJK SC", sans-serif;
}
.site {
    font: 200 17px/20px "DejaVu Sans", sans-serif;
}
```
